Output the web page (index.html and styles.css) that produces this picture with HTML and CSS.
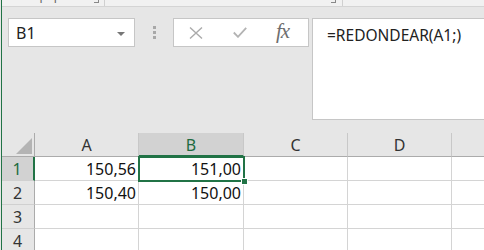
FILE: index.html
```html
<!DOCTYPE html>
<html lang="es">
<head>
<meta charset="utf-8">
<link rel="stylesheet" href="styles.css">
</head>
<body>
<div class="app">
  <div class="inner">
    <div class="ribbon">
      <div class="group g1"><span class="gname">Portapapeles</span><span class="launch"></span></div>
      <div class="group g2"><span class="gname">Fuente</span><span class="launch"></span></div>
      <div class="group g3"><span class="gname">Alineación</span></div>
    </div>
    <div class="fbar">
      <div class="namebox"><span class="ref">B1</span><span class="dd"></span></div>
      <div class="dots"><i></i><i></i><i></i></div>
      <div class="fnbox">
        <svg class="ic" width="14" height="12" viewBox="0 0 14 12"><path d="M1 0.5 L13 11.5 M13 0.5 L1 11.5" stroke="#ababab" stroke-width="1.4" fill="none"/></svg>
        <svg class="ic" width="14" height="11" viewBox="0 0 14 11"><path d="M0.8 5.5 L5 9.8 L13.2 0.8" stroke="#b3b3b3" stroke-width="1.8" fill="none"/></svg>
        <span class="fx">fx</span>
      </div>
      <div class="formula">=REDONDEAR(A1;)</div>
    </div>
    <div class="grid">
      <div class="corner"><span class="tri"></span></div>
      <div class="ch">A</div>
      <div class="ch sel">B</div>
      <div class="ch">C</div>
      <div class="ch">D</div>
      <div class="ch last"></div>

      <div class="rh sel">1</div>
      <div class="cell">150,56</div>
      <div class="cell">151,00</div>
      <div class="cell"></div>
      <div class="cell"></div>
      <div class="cell last"></div>

      <div class="rh">2</div>
      <div class="cell">150,40</div>
      <div class="cell">150,00</div>
      <div class="cell"></div>
      <div class="cell"></div>
      <div class="cell last"></div>

      <div class="rh">3</div>
      <div class="cell"></div>
      <div class="cell"></div>
      <div class="cell"></div>
      <div class="cell"></div>
      <div class="cell last"></div>

      <div class="rh">4</div>
      <div class="cell"></div>
      <div class="cell"></div>
      <div class="cell"></div>
      <div class="cell"></div>
      <div class="cell last"></div>

      <div class="selection"><span class="handle"></span></div>
    </div>
  </div>
</div>
</body>
</html>
```
FILE: styles.css
```css
* { box-sizing: border-box; }
html, body { margin: 0; padding: 0; }
body {
  width: 484px;
  height: 250px;
  overflow: hidden;
  background: #e6e6e6;
  font-family: "Noto Sans", "Open Sans", sans-serif;
}
.app {
  padding-left: 1px;
  height: 250px;
}
.inner {
  border-left: 1px solid #217346;
  height: 250px;
  overflow: hidden;
}
.ribbon {
  height: 7px;
  background: #f1f1f1;
  border-bottom: 1px solid #d4d4d4;
  display: flex;
  overflow: hidden;
  font-size: 12px;
  color: #666;
}
.group {
  display: flex;
  align-items: flex-start;
  border-right: 1px solid #d0d0d0;
  height: 6px;
}
.gname {
  margin-top: -12px;
  line-height: 16px;
}
.launch {
  width: 5px;
  height: 3px;
  border-right: 1px solid #888;
  border-bottom: 1px solid #888;
}
.g1 { width: 103px; padding-left: 7px; justify-content: space-between; padding-right: 5px; }
.g2 { width: 238px; padding-left: 92px; justify-content: space-between; padding-right: 6px; }
.g3 { flex: 1; padding-left: 70px; border-right: none; }

.fbar {
  display: flex;
  align-items: flex-start;
  padding-top: 11px;
  height: 114px;
}
.namebox {
  margin-left: 6px;
  width: 127px;
  height: 29px;
  background: #fff;
  border: 1px solid #c6c6c6;
  display: flex;
  align-items: center;
  justify-content: space-between;
  padding: 0 9px 0 7px;
}
.ref { font-size: 16px; color: #222; }
.dd {
  width: 0; height: 0;
  border-left: 4px solid transparent;
  border-right: 4px solid transparent;
  border-top: 4px solid #777;
  margin-top: 2px;
}
.dots {
  width: 38px;
  height: 29px;
  display: flex;
  flex-direction: column;
  align-items: center;
  justify-content: center;
  gap: 2px;
}
.dots i { display: block; width: 3px; height: 3px; background: #a8a8a8; }
.fnbox {
  width: 136px;
  height: 29px;
  background: #fff;
  border: 1px solid #c6c6c6;
  display: flex;
  align-items: center;
  padding-left: 15px;
  gap: 30px;
}
.fx {
  font-family: "Liberation Serif", "DejaVu Serif", serif;
  font-style: italic;
  font-size: 21px;
  color: #6e6e6e;
  margin-left: -1px;
  margin-top: -3px;
  letter-spacing: -1px;
}
.formula {
  margin-left: 3px;
  flex: 1;
  height: 102px;
  background: #fff;
  border: 1px solid #c6c6c6;
  border-right: none;
  padding: 6px 0 0 14px;
  font-size: 15.5px;
  color: #222;
  line-height: 20px;
}

.grid {
  position: relative;
  margin-top: 12px;
  display: grid;
  grid-template-columns: 33px 104px 105px 104px 104px 1fr;
  grid-template-rows: 24px 24px 24px 24px 24px;
  font-size: 16px;
}
.corner {
  border-right: 1px solid #ababab;
  border-bottom: 1px solid #ababab;
  position: relative;
}
.tri {
  position: absolute;
  right: 2px;
  bottom: 2px;
  width: 0; height: 0;
  border-left: 16px solid transparent;
  border-bottom: 16px solid #b4b4b4;
}
.ch {
  border-right: 1px solid #c8c8c8;
  border-bottom: 1px solid #ababab;
  display: flex;
  align-items: center;
  justify-content: center;
  color: #333;
  padding-top: 1px;
}
.ch.sel {
  background: #d2d2d2;
  border-bottom: 2px solid #217346;
  color: #1e6b41;
  padding-top: 2px;
}
.ch.last { border-right: none; }
.rh {
  border-right: 1px solid #ababab;
  border-bottom: 1px solid #d0d0d0;
  display: flex;
  align-items: center;
  justify-content: center;
  color: #333;
  padding-right: 1px;
}
.rh.sel {
  background: #d2d2d2;
  border-right: 2px solid #217346;
  color: #1e6b41;
}
.cell {
  background: #fff;
  border-right: 1px solid #d4d4d4;
  border-bottom: 1px solid #d4d4d4;
  display: flex;
  align-items: center;
  justify-content: flex-end;
  padding-right: 2px;
  color: #111;
}
.cell.last { border-right: none; }
.selection {
  position: absolute;
  left: 136px;
  top: 23px;
  width: 107px;
  height: 26px;
  border: 2px solid #217346;
}
.handle {
  position: absolute;
  right: -5px;
  bottom: -5px;
  width: 7px;
  height: 7px;
  background: #217346;
  border: 1px solid #fff;
}
```
